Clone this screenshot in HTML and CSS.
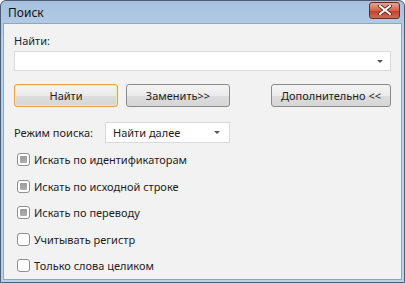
FILE: index.html
```html
<!DOCTYPE html>
<html lang="ru">
<head>
  <meta charset="UTF-8" />
  <meta name="viewport" content="width=device-width, initial-scale=1.0"/>
  <title>Поиск</title>
  <link rel="stylesheet" href="styles.css">
</head>
<body>

  <div class="window">
    <div class="titlebar">
      <span class="title">Поиск</span>
      <button class="close">
        <svg width="14" height="10" viewBox="0 0 14 10">
          <path d="M2 1 L12 9 M12 1 L2 9" stroke="#5a2020" stroke-width="3.6" stroke-linecap="square"/>
          <path d="M2 1 L12 9 M12 1 L2 9" stroke="#ffffff" stroke-width="2" stroke-linecap="square"/>
        </svg>
      </button>
    </div>

    <div class="client">
      <div class="label">Найти:</div>
      <div class="combo">
        <span class="arrow"></span>
      </div>

      <div class="buttons">
        <button class="btn default">Найти</button>
        <button class="btn">Заменить&gt;&gt;</button>
        <button class="btn more">Дополнительно &lt;&lt;</button>
      </div>

      <div class="mode">
        <span class="mode-label">Режим поиска:</span>
        <div class="select">
          <span>Найти далее</span>
          <span class="arrow"></span>
        </div>
      </div>

      <div class="checks">
        <label class="check"><span class="box mixed"></span>Искать по идентификаторам</label>
        <label class="check"><span class="box mixed"></span>Искать по исходной строке</label>
        <label class="check"><span class="box mixed"></span>Искать по переводу</label>
        <label class="check"><span class="box"></span>Учитывать регистр</label>
        <label class="check"><span class="box"></span>Только слова целиком</label>
      </div>
    </div>
  </div>

</body>
</html>
```

FILE: styles.css
```css
body {
  margin: 0;
  padding: 0;
  font-family: 'Noto Sans', 'Open Sans', sans-serif;
  font-size: 11px;
  color: #1e1e1e;
  background: #ffffff;
}

.window {
  width: 405px;
  height: 283px;
  box-sizing: border-box;
  border: 1px solid #4d5d74;
  border-radius: 6px 6px 0 0;
  background: linear-gradient(to bottom, #a6c0de, #b9d1ea 40px);
  display: flex;
  flex-direction: column;
  overflow: hidden;
}

.titlebar {
  height: 24px;
  display: flex;
  align-items: center;
  justify-content: space-between;
  padding: 0 4px 0 7px;
  box-sizing: border-box;
}

.title {
  font-size: 12px;
  color: #101010;
  margin-top: 1px;
}

.close {
  width: 31px;
  height: 17px;
  margin-top: -3px;
  padding: 0;
  border: 1px solid #6b2a24;
  border-radius: 3px;
  background: linear-gradient(to bottom, #e8a190, #d4624c 50%, #c0402a 51%, #d26a52);
  display: flex;
  align-items: center;
  justify-content: center;
}

.client {
  flex: 1;
  margin: 0 2px 2px 2px;
  background: #f2f2f2;
  border: 1px solid #8fa6c2;
  padding: 9px 10px 0 10px;
  box-sizing: border-box;
}

.label {
  height: 16px;
  line-height: 16px;
}

.combo {
  margin-top: 2px;
  height: 20px;
  box-sizing: border-box;
  background: #ffffff;
  border: 1px solid #dadada;
  position: relative;
}

.arrow {
  position: absolute;
  right: 7px;
  top: 8px;
  width: 0;
  height: 0;
  border-left: 3px solid transparent;
  border-right: 3px solid transparent;
  border-top: 3px solid #555;
}

.buttons {
  display: flex;
  margin-top: 13px;
}

.btn {
  height: 23px;
  width: 104px;
  font-family: inherit;
  font-size: 11px;
  color: #1e1e1e;
  border: 1px solid #8a8a8a;
  border-radius: 3px;
  background: linear-gradient(to bottom, #f4f4f4, #ebebeb 50%, #dddddd 51%, #d6d6d6);
  margin-right: 8px;
  padding: 0;
}

.btn.default {
  border-color: #e4a33c;
  box-shadow: inset 0 0 0 1px #fbe3b8;
}

.btn.more {
  width: 120px;
  margin-left: auto;
  margin-right: 0;
}

.mode {
  display: flex;
  align-items: center;
  margin-top: 15px;
}

.mode-label {
  width: 91px;
}

.select {
  width: 125px;
  height: 21px;
  box-sizing: border-box;
  background: #ffffff;
  border: 1px solid #dadada;
  position: relative;
  padding-left: 7px;
  line-height: 19px;
}

.select .arrow {
  right: 9px;
}

.checks {
  margin-top: 4px;
}

.check {
  display: flex;
  align-items: center;
  height: 26.5px;
  padding-left: 3px;
}

.box {
  width: 11px;
  height: 11px;
  border: 1px solid #8e8f8f;
  border-radius: 3px;
  background: #ffffff;
  margin-right: 4px;
  position: relative;
}

.box.mixed::after {
  content: "";
  position: absolute;
  left: 2px;
  top: 2px;
  width: 7px;
  height: 7px;
  border-radius: 1px;
  background: linear-gradient(to bottom, #9a9a9a, #b0b0b0);
}
```
